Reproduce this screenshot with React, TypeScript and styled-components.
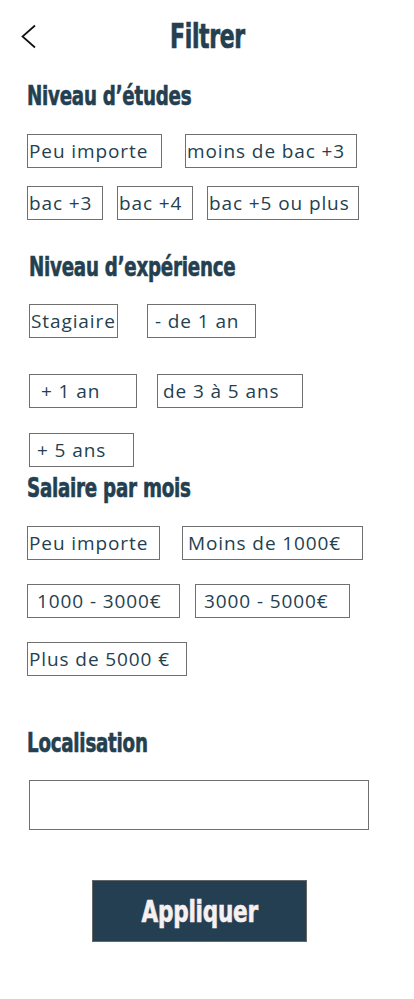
import React from 'react';
import styled, { createGlobalStyle } from 'styled-components';

const navy = '#243f50';
const heavy = "'DejaVu Sans Condensed', 'DejaVu Sans', sans-serif";
const body = "'Open Sans', Lato, sans-serif";

const GlobalStyle = createGlobalStyle`
  html, body {
    margin: 0;
    padding: 0;
    background: #ffffff;
  }
  body {
    font-family: ${body};
    color: ${navy};
  }
`;

const Page = styled.div`
  width: 414px;
  min-height: 999px;
  box-sizing: border-box;
  padding: 14px 0 40px 27px;
`;

const Header = styled.header`
  display: grid;
  grid-template-columns: 1fr auto 1fr;
  align-items: center;
  height: 46px;
  margin-left: -27px;
  padding-left: 21px;
`;

const BackButton = styled.button`
  justify-self: start;
  background: none;
  border: none;
  padding: 0;
  width: 16px;
  height: 26px;
  cursor: pointer;
  display: flex;
`;

const Title = styled.h1`
  margin: 0;
  font-family: ${heavy};
  font-stretch: condensed;
  font-weight: 700;
  font-size: 33px;
  line-height: 36px;
  letter-spacing: -0.5px;
  color: ${navy};
  -webkit-text-stroke: 0.7px ${navy};
  transform: translateX(-10px) scaleX(0.74);
`;

const SectionTitle = styled.h2<{ $top: number; $indent?: number }>`
  margin: ${(p) => p.$top}px 0 0 ${(p) => p.$indent ?? 0}px;
  font-family: ${heavy};
  font-stretch: condensed;
  font-weight: 700;
  font-size: 26px;
  line-height: 28px;
  letter-spacing: -0.3px;
  color: ${navy};
  -webkit-text-stroke: 0.6px ${navy};
  transform: scaleX(0.78);
  transform-origin: left center;
  white-space: nowrap;
`;

const ChipRow = styled.div<{ $top: number; $gap: number; $indent?: number }>`
  display: flex;
  gap: ${(p) => p.$gap}px;
  margin-top: ${(p) => p.$top}px;
  margin-left: ${(p) => p.$indent ?? 0}px;
`;

const Chip = styled.button<{ $w: number; $pad?: number }>`
  box-sizing: border-box;
  width: ${(p) => p.$w}px;
  height: 34px;
  border: 1px solid #707070;
  background: #fff;
  padding: 0 0 1px ${(p) => p.$pad ?? 1}px;
  display: flex;
  align-items: center;
  font-family: ${body};
  font-size: 19px;
  letter-spacing: 0.9px;
  color: ${navy};
  white-space: nowrap;
  overflow: hidden;
  cursor: pointer;
`;

const LocationInput = styled.input`
  box-sizing: border-box;
  display: block;
  width: 340px;
  height: 50px;
  margin: 23px 0 0 2px;
  border: 1px solid #707070;
  font-family: ${body};
  font-size: 19px;
  padding: 0 10px;
  color: ${navy};
  outline: none;
`;

const ApplyButton = styled.button`
  display: flex;
  align-items: center;
  justify-content: center;
  box-sizing: border-box;
  width: 215px;
  height: 62px;
  margin: 50px 0 0 65px;
  padding: 0;
  background: #233f51;
  border: 1px solid #666;
  cursor: pointer;
`;

const ApplyLabel = styled.span`
  display: inline-block;
  color: #f7f0f0;
  font-family: ${heavy};
  font-stretch: condensed;
  font-weight: 700;
  font-size: 30px;
  letter-spacing: -0.3px;
  -webkit-text-stroke: 0.6px #f7f0f0;
  transform: scaleX(0.8);
`;

type ChipDef = { label: string; w: number; pad?: number };

const Row = ({ top, gap, indent, chips }: { top: number; gap: number; indent?: number; chips: ChipDef[] }) => (
  <ChipRow $top={top} $gap={gap} $indent={indent}>
    {chips.map((c) => (
      <Chip key={c.label} $w={c.w} $pad={c.pad}>
        {c.label}
      </Chip>
    ))}
  </ChipRow>
);

export default function App() {
  return (
    <>
      <GlobalStyle />
      <Page>
        <Header>
          <BackButton aria-label="Retour">
            <svg width="16" height="26" viewBox="0 0 16 26">
              <polyline points="14,1.5 1.5,12.5 14,23.5" fill="none" stroke="#111" strokeWidth="1.7" />
            </svg>
          </BackButton>
          <Title>Filtrer</Title>
          <span />
        </Header>

        <SectionTitle $top={22}>Niveau d’études</SectionTitle>
        <Row
          top={24}
          gap={23}
          chips={[
            { label: 'Peu importe', w: 135 },
            { label: 'moins de bac +3', w: 172 },
          ]}
        />
        <Row
          top={18}
          gap={14}
          chips={[
            { label: 'bac +3', w: 76 },
            { label: 'bac +4', w: 76 },
            { label: 'bac +5 ou plus', w: 152 },
          ]}
        />

        <SectionTitle $top={33} $indent={2}>Niveau d’expérience</SectionTitle>
        <Row
          top={23}
          gap={29}
          indent={2}
          chips={[
            { label: 'Stagiaire', w: 89 },
            { label: '- de 1 an', w: 109, pad: 7 },
          ]}
        />
        <Row
          top={36}
          gap={20}
          indent={2}
          chips={[
            { label: '+ 1 an', w: 108, pad: 11 },
            { label: 'de 3 à 5 ans', w: 146, pad: 5 },
          ]}
        />
        <Row top={25} gap={0} indent={2} chips={[{ label: '+ 5 ans', w: 105, pad: 7 }]} />

        <SectionTitle $top={7}>Salaire par mois</SectionTitle>
        <Row
          top={24}
          gap={22}
          chips={[
            { label: 'Peu importe', w: 133 },
            { label: 'Moins de 1000€', w: 181, pad: 5 },
          ]}
        />
        <Row
          top={24}
          gap={15}
          chips={[
            { label: '1000 - 3000€', w: 153, pad: 9 },
            { label: '3000 - 5000€', w: 155, pad: 8 },
          ]}
        />
        <Row top={24} gap={0} chips={[{ label: 'Plus de 5000 €', w: 160 }]} />

        <SectionTitle $top={53}>Localisation</SectionTitle>
        <LocationInput aria-label="Localisation" />

        <ApplyButton>
          <ApplyLabel>Appliquer</ApplyLabel>
        </ApplyButton>
      </Page>
    </>
  );
}
